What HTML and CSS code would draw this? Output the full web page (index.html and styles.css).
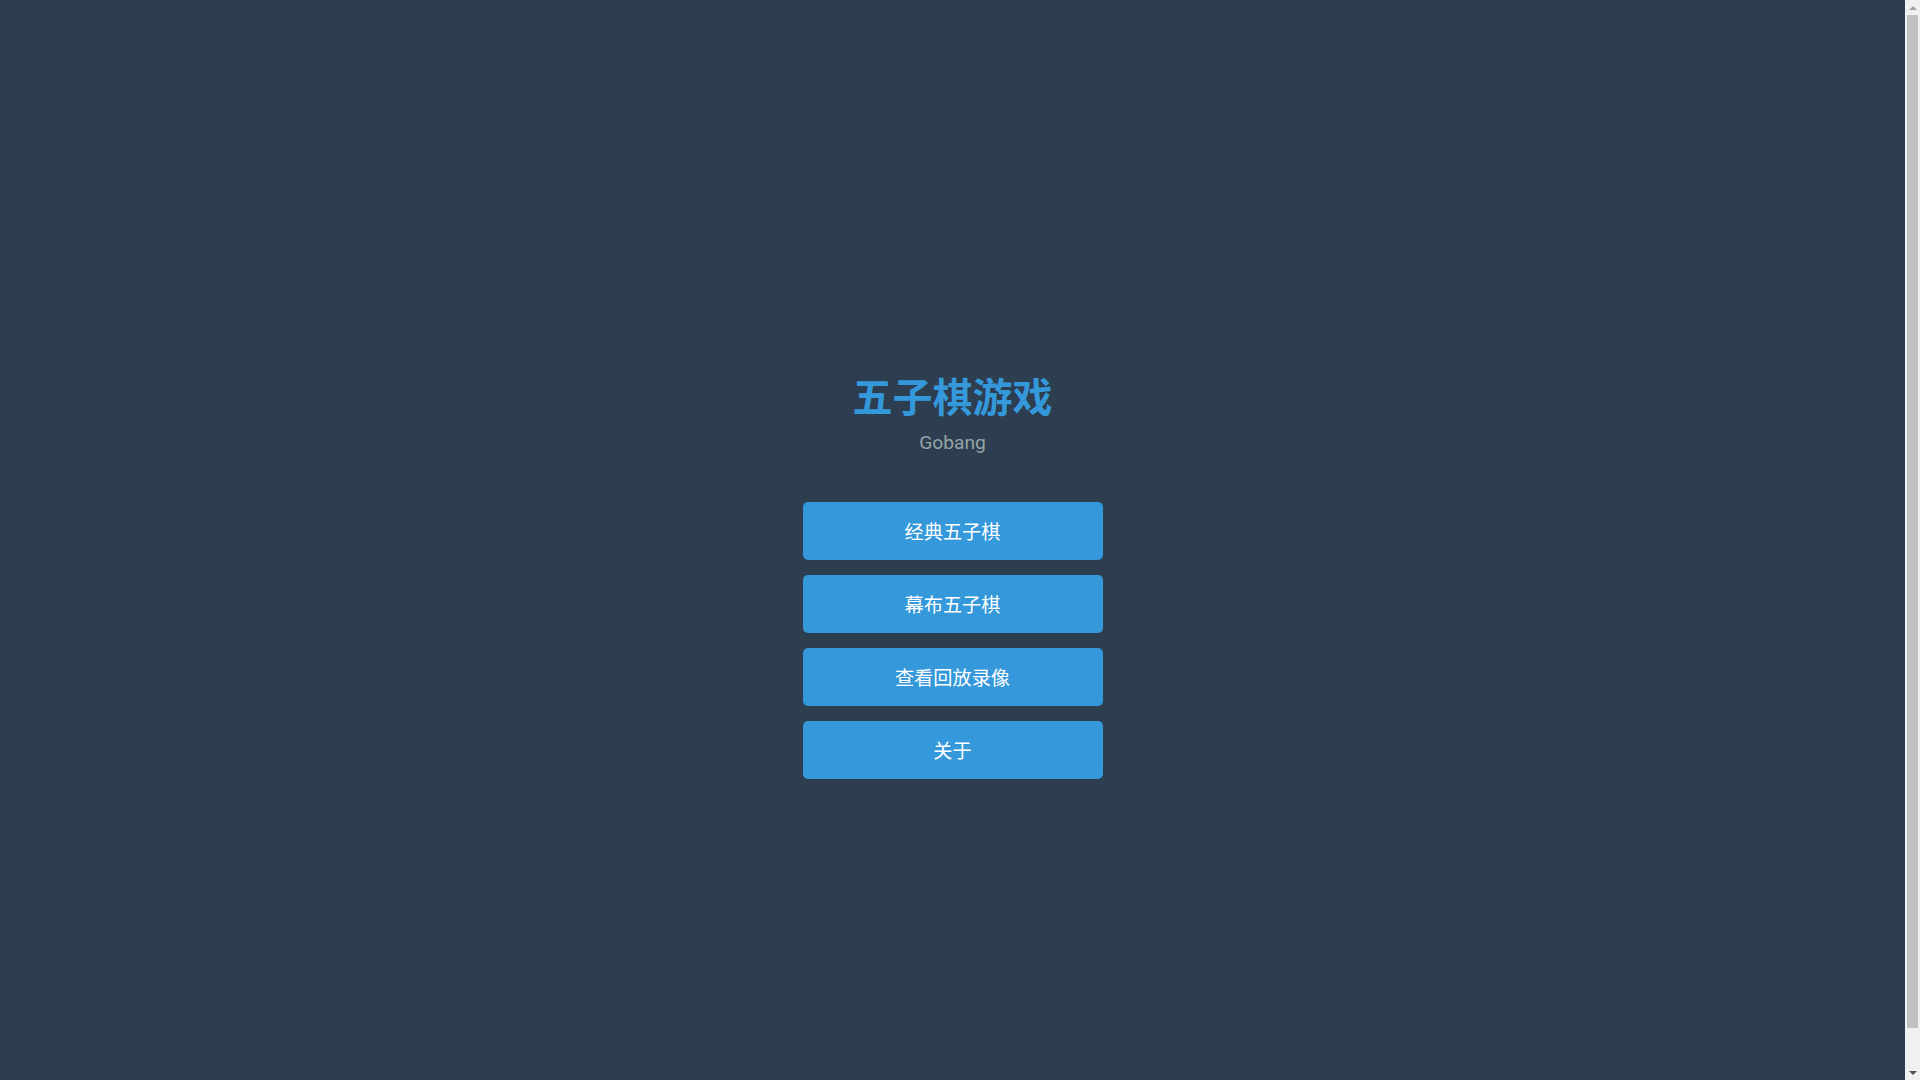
FILE: index.html
```html
<!DOCTYPE html>
<html lang="zh-CN">
<head>
<meta charset="utf-8">
<title>五子棋游戏</title>
<link rel="stylesheet" href="styles.css">
</head>
<body>
<div class="app">
  <div class="page">
    <div class="menu">
      <h1 class="title">五子棋游戏</h1>
      <p class="subtitle">Gobang</p>
      <div class="buttons">
        <button class="btn">经典五子棋</button>
        <button class="btn">幕布五子棋</button>
        <button class="btn">查看回放录像</button>
        <button class="btn">关于</button>
      </div>
    </div>
  </div>
  <div class="scrollbar" aria-hidden="true">
    <div class="sb-btn"><span class="arrow-up"></span></div>
    <div class="sb-track"><div class="sb-thumb"></div></div>
    <div class="sb-btn"><span class="arrow-down"></span></div>
  </div>
</div>
</body>
</html>
```

FILE: styles.css
```css
html, body {
  margin: 0;
  padding: 0;
  background: #2c3e50;
  overflow: hidden;
}

body {
  font-family: Roboto, "Noto Sans CJK SC", sans-serif;
}

.app {
  display: flex;
  height: 100vh;
}

.page {
  flex: 1;
  box-sizing: border-box;
  height: 100vh;
  padding: 40px 20px 0;
  display: flex;
  flex-direction: column;
  justify-content: center;
  align-items: center;
}

.menu {
  display: flex;
  flex-direction: column;
  align-items: center;
  padding-top: 25px;
}

.title {
  margin: 0 0 7px;
  font-size: 40px;
  font-weight: bold;
  color: #3498db;
}

.subtitle {
  margin: 0 0 48px;
  font-size: 19.2px;
  color: #95a5a6;
}

.buttons {
  display: flex;
  flex-direction: column;
  gap: 15px;
}

.btn {
  width: 300px;
  padding: 15px;
  border: none;
  border-radius: 5px;
  background: #3498db;
  color: #ffffff;
  font-family: Roboto, "Noto Sans CJK SC", sans-serif;
  font-size: 19.2px;
  line-height: normal;
  cursor: pointer;
}

.scrollbar {
  width: 15px;
  flex: 0 0 15px;
  background: #f1f1f1;
  display: flex;
  flex-direction: column;
}

.sb-btn {
  height: 15px;
  display: flex;
  align-items: center;
  justify-content: center;
}

.arrow-up {
  width: 0;
  height: 0;
  border-left: 4px solid transparent;
  border-right: 4px solid transparent;
  border-bottom: 4px solid #a3a3a3;
}

.arrow-down {
  width: 0;
  height: 0;
  border-left: 4px solid transparent;
  border-right: 4px solid transparent;
  border-top: 4px solid #505050;
}

.sb-track {
  flex: 1;
  padding: 0 2px;
}

.sb-thumb {
  height: 1013px;
  background: #c1c1c1;
}
```
